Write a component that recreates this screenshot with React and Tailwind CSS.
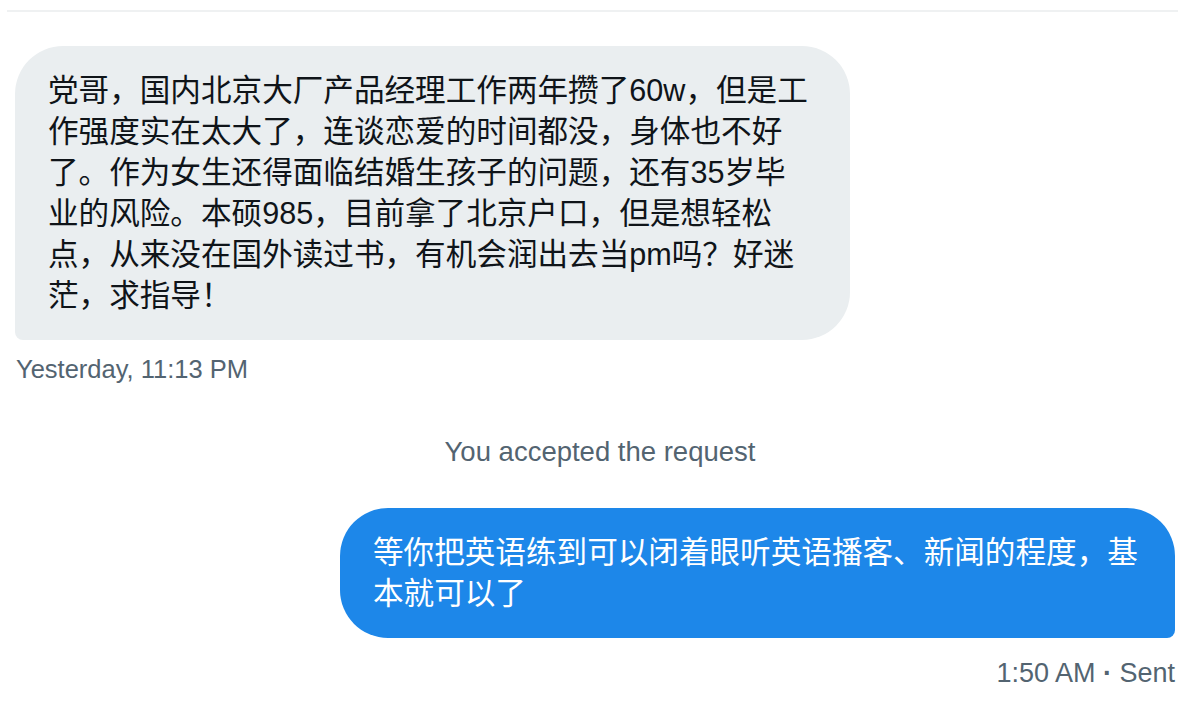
import React from 'react';

const font = { fontFamily: '"Liberation Sans", "Noto Sans CJK SC", sans-serif' };

const received = [
  '党哥，国内北京大厂产品经理工作两年攒了60w，但是工',
  '作强度实在太大了，连谈恋爱的时间都没，身体也不好',
  '了。作为女生还得面临结婚生孩子的问题，还有35岁毕',
  '业的风险。本硕985，目前拿了北京户口，但是想轻松',
  '点，从来没在国外读过书，有机会润出去当pm吗？好迷',
  '茫，求指导！',
];

const sent = ['等你把英语练到可以闭着眼听英语播客、新闻的程度，基', '本就可以了'];

function Bubble({ lines, mine }) {
  return (
    <div
      className={
        mine
          ? 'w-[835px] rounded-[48px] rounded-br-[8px] bg-[#1d87e9] px-[33px] py-6 text-white'
          : 'w-[835px] rounded-[48px] rounded-bl-[8px] bg-[#eaeef0] px-[33px] py-6 text-[#0f1419]'
      }
    >
      {lines.map((l, i) => (
        <div key={i} className="whitespace-nowrap text-[30.6px] leading-[41px]">{l}</div>
      ))}
    </div>
  );
}

export default function App() {
  return (
    <div className="h-[716px] w-[1200px] overflow-hidden bg-white pt-[10px]" style={font}>
      <div className="mx-[7px] h-[2px] w-[1171px] bg-[#eff1f2]" />

      <div className="mt-[34px] pl-[15px]">
        <Bubble lines={received} />
        <div className="mt-[14px] pl-px text-[25.5px] leading-[30px] text-[#536471]">Yesterday, 11:13 PM</div>
      </div>

      <div className="mt-[52px] text-center text-[27.5px] leading-[32px] text-[#536471]">You accepted the request</div>

      <div className="mt-10 flex flex-col items-end pr-[25px]">
        <Bubble lines={sent} mine />
        <div className="mt-5 text-[27px] leading-[30px] text-[#536471]">
          1:50 AM <span className="font-bold">·</span> Sent
        </div>
      </div>
    </div>
  );
}
